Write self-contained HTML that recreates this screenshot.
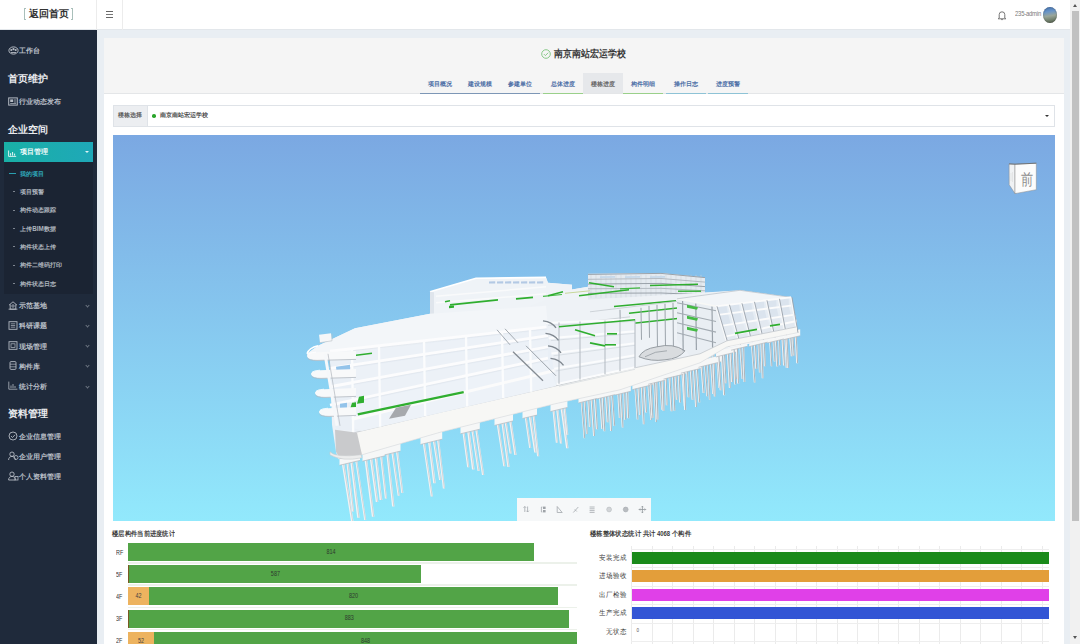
<!DOCTYPE html>
<html><head><meta charset="utf-8">
<style>
*{box-sizing:border-box;margin:0;padding:0}
html,body{width:1080px;height:644px;overflow:hidden;background:#e9eef3;font-family:"Liberation Sans",sans-serif}
.a{position:absolute}
.t{position:absolute;white-space:nowrap;line-height:1}
#hdr{left:0;top:0;width:1070px;height:30px;background:#fff;border-bottom:1px solid #e3e7eb}
#side{left:0;top:30px;width:97px;height:614px;background:#1f2a3b}
.si{color:#b9bfc7;font-size:7px;font-weight:bold}
.sh{color:#e9ebee;font-size:10px;font-weight:bold}
.sub{color:#aeb5be;font-size:6.3px;font-weight:bold}
.ic{position:absolute;border:1px solid #aab1bb;border-radius:1px}
.chev{position:absolute;width:3px;height:3px;border-right:1px solid #6b7480;border-bottom:1px solid #6b7480;transform:rotate(45deg)}
#panel{left:104px;top:38px;width:960px;height:620px;background:#fff}
#phead{left:0;top:0;width:960px;height:56px;background:#f5f5f5;border-bottom:1px solid #e4e6e8}
.tab{position:absolute;top:35.2px;height:21px;font-size:6.3px;font-weight:bold;color:#4d6fa6;text-align:center;line-height:21px}
.ul{position:absolute;top:54.5px;height:1.5px}
#sb{left:1070px;top:0;width:10px;height:644px;background:#f1f1f1}
</style></head><body>
<!-- header -->
<div id="hdr" class="a">
  <div class="a" style="left:96px;top:0;width:1px;height:30px;background:#ececec"></div>
  <div class="a" style="left:122px;top:0;width:1px;height:30px;background:#ececec"></div>
  <div class="a" style="left:23.5px;top:8px;width:2px;height:12px;border:1px solid #a9bfba;border-right:none"></div>
  <div class="t" style="left:28.5px;top:9.2px;font-size:10.2px;font-weight:bold;color:#333">返回首页</div>
  <div class="a" style="left:71px;top:8px;width:2px;height:12px;border:1px solid #a9bfba;border-left:none"></div>
  <div class="a" style="left:105.5px;top:11px;width:7.5px;height:1.2px;background:#666"></div>
  <div class="a" style="left:105.5px;top:14px;width:7.5px;height:1.2px;background:#777"></div>
  <div class="a" style="left:105.5px;top:17px;width:7.5px;height:1.2px;background:#666"></div>
  <!-- bell -->
  <svg class="a" style="left:997px;top:10px" width="10" height="11" viewBox="0 0 10 11"><path d="M2.2 8V4.6a2.8 2.8 0 0 1 5.6 0V8l1 0.8H1.2z" fill="none" stroke="#666" stroke-width="0.9"/><path d="M4.2 9.6h1.6" stroke="#666" stroke-width="0.9"/></svg>
  <div class="t" style="left:1015px;top:10.2px;font-size:8px;color:#7a7a7a;letter-spacing:-0.3px;transform:scaleX(0.74);transform-origin:left">235-admin</div>
  <div class="a" style="left:1043px;top:7px;width:14px;height:16px;border-radius:50%;background:linear-gradient(170deg,#3f6fae 0%,#6a95c8 30%,#9aa69a 55%,#6f7d6a 80%,#4b5646 100%);box-shadow:inset 0 0 1.5px rgba(0,0,0,0.5)"></div>
</div>
<!-- sidebar -->
<div id="side" class="a">
  <!-- 工作台 -->
  <svg class="a" style="left:8px;top:16px" width="11" height="9" viewBox="0 0 11 9"><ellipse cx="5.5" cy="4.5" rx="4.6" ry="3.6" fill="none" stroke="#b4bac3" stroke-width="1"/><circle cx="3.3" cy="4" r="1.1" fill="#b4bac3"/><circle cx="5.5" cy="3.2" r="1.1" fill="#b4bac3"/><circle cx="7.7" cy="4" r="1.1" fill="#b4bac3"/><path d="M3 6.5h5" stroke="#b4bac3" stroke-width="0.9"/></svg>
  <div class="t si" style="left:19.4px;top:16.6px">工作台</div>
  <div class="t sh" style="left:8.3px;top:43.7px">首页维护</div>
  <!-- 行业动态发布 -->
  <svg class="a" style="left:8px;top:67px" width="10" height="9" viewBox="0 0 10 9"><rect x="0.7" y="0.9" width="8.6" height="7.2" fill="none" stroke="#b4bac3" stroke-width="1"/><rect x="2.2" y="2.4" width="3" height="2.6" fill="#b4bac3"/><path d="M6 3h2.3M6 5h2.3M2.2 6.6h6" stroke="#b4bac3" stroke-width="0.8"/></svg>
  <div class="t si" style="left:19.4px;top:67.8px">行业动态发布</div>
  <div class="t sh" style="left:8.3px;top:94.7px">企业空间</div>
  <!-- active 项目管理 -->
  <div class="a" style="left:4.3px;top:111.8px;width:88.6px;height:20.2px;background:linear-gradient(90deg,#19b0a6,#1fa8b8)"></div>
  <svg class="a" style="left:8.3px;top:119.5px" width="9" height="7" viewBox="0 0 9 7"><path d="M0.6 0.5V6.4H8.2" fill="none" stroke="#e8f6f6" stroke-width="0.9"/><path d="M2.6 5.6V3.2M4.6 5.6V2M6.6 5.6V3.6" stroke="#e8f6f6" stroke-width="1"/></svg>
  <div class="t" style="left:20.2px;top:118.8px;font-size:6.5px;font-weight:bold;color:#eefafa">项目管理</div>
  <div class="a" style="left:85.2px;top:121.4px;width:0;height:0;border-left:2.2px solid transparent;border-right:2.2px solid transparent;border-top:2.4px solid #dff4f6"></div>
  <!-- submenu -->
  <div class="a" style="left:4.3px;top:132px;width:88.6px;height:132px;background:#1b2433"></div>
  <div class="a" style="left:8.5px;top:143.4px;width:7.8px;height:0.9px;background:#2a9fb0"></div>
  <div class="t sub" style="left:20.2px;top:141.2px;color:#2fa6b8">我的项目</div>
  <div class="a" style="left:12.8px;top:161.4px;width:2.4px;height:0.9px;background:#7d8590"></div>
  <div class="t sub" style="left:20.2px;top:159.2px">项目预警</div>
  <div class="a" style="left:12.8px;top:179.6px;width:2.4px;height:0.9px;background:#7d8590"></div>
  <div class="t sub" style="left:20.2px;top:177.4px">构件动态跟踪</div>
  <div class="a" style="left:12.8px;top:198.1px;width:2.4px;height:0.9px;background:#7d8590"></div>
  <div class="t sub" style="left:20.2px;top:195.9px">上传BIM数据</div>
  <div class="a" style="left:12.8px;top:216.3px;width:2.4px;height:0.9px;background:#7d8590"></div>
  <div class="t sub" style="left:20.2px;top:214.1px">构件状态上传</div>
  <div class="a" style="left:12.8px;top:234.5px;width:2.4px;height:0.9px;background:#7d8590"></div>
  <div class="t sub" style="left:20.2px;top:232.3px">构件二维码打印</div>
  <div class="a" style="left:12.8px;top:252.9px;width:2.4px;height:0.9px;background:#7d8590"></div>
  <div class="t sub" style="left:20.2px;top:250.7px">构件状态日志</div>
  <!-- groups -->
  <svg class="a" style="left:8px;top:271px" width="10" height="9" viewBox="0 0 10 9"><path d="M1 4.2L5 0.8L9 4.2M2.2 3.4V8.2H7.8V3.4M0.6 8.2H9.4" fill="none" stroke="#b4bac3" stroke-width="0.9"/><circle cx="5" cy="5" r="1.2" fill="none" stroke="#b4bac3" stroke-width="0.8"/></svg>
  <div class="t si" style="left:19.4px;top:272.2px">示范基地</div>
  <div class="chev" style="left:85.6px;top:273.8px"></div>
  <svg class="a" style="left:8px;top:291px" width="10" height="9" viewBox="0 0 10 9"><rect x="1" y="0.7" width="8" height="7.6" fill="none" stroke="#b4bac3" stroke-width="0.9"/><path d="M2.8 2.8h4.4M2.8 4.5h4.4M2.8 6.2h4.4" stroke="#b4bac3" stroke-width="0.7"/></svg>
  <div class="t si" style="left:19.4px;top:292.3px">科研课题</div>
  <div class="chev" style="left:85.6px;top:293.9px"></div>
  <svg class="a" style="left:8px;top:311px" width="10" height="9" viewBox="0 0 10 9"><rect x="1" y="0.7" width="8" height="7.6" fill="none" stroke="#b4bac3" stroke-width="0.9"/><rect x="3" y="2.8" width="4" height="3.6" fill="none" stroke="#b4bac3" stroke-width="0.7"/></svg>
  <div class="t si" style="left:19.4px;top:312.5px">现场管理</div>
  <div class="chev" style="left:85.6px;top:314.1px"></div>
  <svg class="a" style="left:8px;top:331px" width="10" height="9" viewBox="0 0 10 9"><rect x="2" y="0.6" width="6" height="7.8" rx="1" fill="none" stroke="#b4bac3" stroke-width="0.9"/><path d="M2 3.2h6M2 5.8h6" stroke="#b4bac3" stroke-width="0.7"/></svg>
  <div class="t si" style="left:19.4px;top:332.6px">构件库</div>
  <div class="chev" style="left:85.6px;top:334.2px"></div>
  <svg class="a" style="left:8px;top:351px" width="10" height="9" viewBox="0 0 10 9"><path d="M0.8 0.6V8.2H9.4" fill="none" stroke="#b4bac3" stroke-width="0.8"/><path d="M3 7V4.5M5 7V3M7 7V5" stroke="#b4bac3" stroke-width="0.8"/></svg>
  <div class="t si" style="left:19.4px;top:352.9px">统计分析</div>
  <div class="chev" style="left:85.6px;top:354.5px"></div>
  <div class="t sh" style="left:8.3px;top:378.9px">资料管理</div>
  <svg class="a" style="left:8px;top:401px" width="10" height="10" viewBox="0 0 10 10"><circle cx="5" cy="5" r="4" fill="none" stroke="#b4bac3" stroke-width="0.9"/><path d="M3 5.1l1.5 1.4L7 3.8" fill="none" stroke="#b4bac3" stroke-width="0.9"/></svg>
  <div class="t si" style="left:19.4px;top:402.6px">企业信息管理</div>
  <svg class="a" style="left:8px;top:421px" width="11" height="10" viewBox="0 0 11 10"><circle cx="4" cy="3.2" r="2.2" fill="none" stroke="#b4bac3" stroke-width="0.9"/><path d="M0.6 9c0-2.4 1.5-3.6 3.4-3.6s3.4 1.2 3.4 3.6" fill="none" stroke="#b4bac3" stroke-width="0.9"/><circle cx="8" cy="6.5" r="2" fill="none" stroke="#b4bac3" stroke-width="0.8"/></svg>
  <div class="t si" style="left:19.4px;top:422.7px">企业用户管理</div>
  <svg class="a" style="left:8px;top:441px" width="11" height="10" viewBox="0 0 11 10"><circle cx="4" cy="3.2" r="2.2" fill="none" stroke="#b4bac3" stroke-width="0.9"/><path d="M0.6 9c0-2.4 1.5-3.6 3.4-3.6s3.4 1.2 3.4 3.6z" fill="none" stroke="#b4bac3" stroke-width="0.9"/><rect x="7" y="5.5" width="3" height="3.5" fill="none" stroke="#b4bac3" stroke-width="0.8"/></svg>
  <div class="t si" style="left:19.4px;top:442.9px">个人资料管理</div>
</div>
<!-- panel -->
<div id="panel" class="a">
  <div id="phead" class="a">
    <svg class="a" style="left:436.5px;top:10.5px" width="10" height="10" viewBox="0 0 10 10"><circle cx="5" cy="5" r="4.3" fill="none" stroke="#7ec47e" stroke-width="0.9"/><path d="M2.9 5.1l1.5 1.5L7.2 3.7" fill="none" stroke="#7ec47e" stroke-width="0.9"/></svg>
    <div class="t" style="left:450.4px;top:10.8px;font-size:9.1px;font-weight:bold;color:#3a3a3a;transform:scaleY(1.12);transform-origin:top">南京南站宏运学校</div>
    <div class="tab" style="left:315.7px;width:40px">项目概况</div>
    <div class="tab" style="left:355.7px;width:40px">建设规模</div>
    <div class="tab" style="left:395.7px;width:40.3px">参建单位</div>
    <div class="tab" style="left:439.2px;width:39.6px">总体进度</div>
    <div class="a" style="left:478.8px;top:34.8px;width:39.8px;height:20.7px;background:#e6e8eb"></div>
    <div class="tab" style="left:478.8px;width:39.8px;color:#666">楼栋进度</div>
    <div class="tab" style="left:519px;width:39.7px">构件明细</div>
    <div class="tab" style="left:562.3px;width:39.5px">操作日志</div>
    <div class="tab" style="left:604px;width:39.6px">进度预警</div>
    <div class="ul" style="left:315.7px;width:120.3px;background:#7d97b6"></div>
    <div class="ul" style="left:439.2px;width:39.6px;background:#9ad08a"></div>
    <div class="ul" style="left:519px;width:39.7px;background:#9ad08a"></div>
    <div class="ul" style="left:562.3px;width:39.5px;background:#8ec3d6"></div>
    <div class="ul" style="left:604px;width:39.6px;background:#8ec3d6"></div>
  </div>
  <!-- select -->
  <div class="a" style="left:9px;top:66.6px;width:942px;height:22.4px;border:1px solid #dfe3e8;background:#fff"></div>
  <div class="a" style="left:9px;top:66.6px;width:34.7px;height:22.4px;border:1px solid #dfe3e8;background:#eceef1"></div>
  <div class="t" style="left:14px;top:74.6px;font-size:5.9px;font-weight:bold;color:#5a5a5a">楼栋选择</div>
  <div class="a" style="left:48.3px;top:76.2px;width:3.6px;height:3.6px;border-radius:50%;background:#2aa52a"></div>
  <div class="t" style="left:55.9px;top:74.6px;font-size:5.9px;font-weight:bold;color:#4a4a4a">南京南站宏运学校</div>
  <div class="a" style="left:940.5px;top:76.5px;width:0;height:0;border-left:2.2px solid transparent;border-right:2.2px solid transparent;border-top:2.6px solid #333"></div>
  <!-- viewer -->
  <div id="viewer" class="a" style="left:9px;top:97.2px;width:942px;height:385.8px;background:linear-gradient(180deg,#7ba8e2 0%,#92e9fc 100%);overflow:hidden">
    <!--MODEL--><svg class="a" style="left:0;top:0" width="942" height="385.8" viewBox="113 135.2 942 385.8"><polygon points="340.8,457.5 343.3,457.5 353.7,522.5 351.2,522.5" fill="#f3f4f5" /><line x1="342.5" y1="457.5" x2="352.9" y2="522.5" stroke="#b8bec4" stroke-width="0.6" /><polygon points="345.7,456.7 347.9,456.7 354.1,511.6 352,511.6" fill="#f3f4f5" /><line x1="347.2" y1="456.7" x2="353.5" y2="511.6" stroke="#b8bec4" stroke-width="0.6" /><polygon points="349.6,456.1 352.1,456.1 359.7,517.9 357.2,517.9" fill="#f3f4f5" /><line x1="351.3" y1="456.1" x2="359" y2="517.9" stroke="#b8bec4" stroke-width="0.6" /><polygon points="354.4,455.3 356.4,455.3 366.2,520.1 364.2,520.1" fill="#f3f4f5" /><line x1="355.8" y1="455.3" x2="365.6" y2="520.1" stroke="#b8bec4" stroke-width="0.6" /><polygon points="339.5,456.5 360,451.6 360,460.6 339.5,465.5" fill="#f6f7f7" /><line x1="339.5" y1="465.5" x2="360" y2="460.6" stroke="#b3b8bd" stroke-width="0.7" /><polygon points="363.7,453.5 366.3,453.5 374.4,517 371.9,517" fill="#f3f4f5" /><line x1="365.5" y1="453.5" x2="373.7" y2="517" stroke="#b8bec4" stroke-width="0.6" /><polygon points="368.9,452 371.4,452 378.3,502.2 375.8,502.2" fill="#f3f4f5" /><line x1="370.6" y1="452" x2="377.5" y2="502.2" stroke="#b8bec4" stroke-width="0.6" /><polygon points="373.8,450.6 376.3,450.6 382.3,500.3 379.7,500.3" fill="#f3f4f5" /><line x1="375.6" y1="450.6" x2="381.5" y2="500.3" stroke="#b8bec4" stroke-width="0.6" /><polygon points="379.3,449 381.3,449 387,498.6 384.9,498.6" fill="#f3f4f5" /><line x1="380.7" y1="449" x2="386.4" y2="498.6" stroke="#b8bec4" stroke-width="0.6" /><polygon points="362.5,452.4 385,447 385,456 362.5,461.4" fill="#f6f7f7" /><line x1="362.5" y1="461.4" x2="385" y2="456" stroke="#b3b8bd" stroke-width="0.7" /><polygon points="385.6,447.2 387.9,447.2 394.5,506.7 392.1,506.7" fill="#f3f4f5" /><line x1="387.2" y1="447.2" x2="393.8" y2="506.7" stroke="#b8bec4" stroke-width="0.6" /><polygon points="390.4,445.8 392.5,445.8 399.7,495.9 397.7,495.9" fill="#f3f4f5" /><line x1="391.9" y1="445.8" x2="399.1" y2="495.9" stroke="#b8bec4" stroke-width="0.6" /><polygon points="395.1,444.4 397.3,444.4 403.4,493.2 401.3,493.2" fill="#f3f4f5" /><line x1="396.6" y1="444.4" x2="402.7" y2="493.2" stroke="#b8bec4" stroke-width="0.6" /><polygon points="384.5,446.1 400.5,442.3 400.5,451.3 384.5,455.1" fill="#f6f7f7" /><line x1="384.5" y1="455.1" x2="400.5" y2="451.3" stroke="#b3b8bd" stroke-width="0.7" /><polygon points="421.8,436.8 424,436.8 432.9,496.8 430.7,496.8" fill="#f3f4f5" /><line x1="423.3" y1="436.8" x2="432.2" y2="496.8" stroke="#b8bec4" stroke-width="0.6" /><polygon points="427.2,435.2 429.7,435.2 435.7,483.5 433.2,483.5" fill="#f3f4f5" /><line x1="428.9" y1="435.2" x2="434.9" y2="483.5" stroke="#b8bec4" stroke-width="0.6" /><polygon points="431.7,433.9 433.9,433.9 441.3,480.3 439.1,480.3" fill="#f3f4f5" /><line x1="433.2" y1="433.9" x2="440.6" y2="480.3" stroke="#b8bec4" stroke-width="0.6" /><polygon points="436.2,432.6 438.3,432.6 445,488.7 442.9,488.7" fill="#f3f4f5" /><line x1="437.7" y1="432.6" x2="444.4" y2="488.7" stroke="#b8bec4" stroke-width="0.6" /><polygon points="420.5,435.7 442.2,430.4 442.2,439.4 420.5,444.7" fill="#f6f7f7" /><line x1="420.5" y1="444.7" x2="442.2" y2="439.4" stroke="#b3b8bd" stroke-width="0.7" /><polygon points="461.6,426.2 463.7,426.2 469.3,467.5 467.2,467.5" fill="#f3f4f5" /><line x1="463.1" y1="426.2" x2="468.7" y2="467.5" stroke="#b8bec4" stroke-width="0.6" /><polygon points="466.3,425 468.9,425 474.6,469.7 472,469.7" fill="#f3f4f5" /><line x1="468.1" y1="425" x2="473.8" y2="469.7" stroke="#b8bec4" stroke-width="0.6" /><polygon points="470.4,424 472.5,424 479.7,471.2 477.6,471.2" fill="#f3f4f5" /><line x1="471.9" y1="424" x2="479" y2="471.2" stroke="#b8bec4" stroke-width="0.6" /><polygon points="474.3,423 476.4,423 484.2,475.1 482,475.1" fill="#f3f4f5" /><line x1="475.8" y1="423" x2="483.5" y2="475.1" stroke="#b8bec4" stroke-width="0.6" /><polygon points="460.5,425 479.8,420.4 479.8,429.4 460.5,434" fill="#f6f7f7" /><line x1="460.5" y1="434" x2="479.8" y2="429.4" stroke="#b3b8bd" stroke-width="0.7" /><polygon points="495.7,417.7 497.8,417.7 505.4,466.5 503.3,466.5" fill="#f3f4f5" /><line x1="497.2" y1="417.7" x2="504.8" y2="466.5" stroke="#b8bec4" stroke-width="0.6" /><polygon points="500.5,416.5 502.7,416.5 509.6,467.2 507.4,467.2" fill="#f3f4f5" /><line x1="502" y1="416.5" x2="508.9" y2="467.2" stroke="#b8bec4" stroke-width="0.6" /><polygon points="503.6,415.7 505.7,415.7 511.7,453.7 509.6,453.7" fill="#f3f4f5" /><line x1="505.1" y1="415.7" x2="511.1" y2="453.7" stroke="#b8bec4" stroke-width="0.6" /><polygon points="508.2,414.6 510.6,414.6 516.6,455.3 514.3,455.3" fill="#f3f4f5" /><line x1="509.9" y1="414.6" x2="515.9" y2="455.3" stroke="#b8bec4" stroke-width="0.6" /><polygon points="494.5,416.6 513,412.2 513,421.2 494.5,425.6" fill="#f6f7f7" /><line x1="494.5" y1="425.6" x2="513" y2="421.2" stroke="#b3b8bd" stroke-width="0.7" /><polygon points="523.8,410.7 525.8,410.7 531.2,448.3 529.2,448.3" fill="#f3f4f5" /><line x1="525.2" y1="410.7" x2="530.6" y2="448.3" stroke="#b8bec4" stroke-width="0.6" /><polygon points="527.7,409.8 530.1,409.8 536.6,452.6 534.2,452.6" fill="#f3f4f5" /><line x1="529.4" y1="409.8" x2="535.9" y2="452.6" stroke="#b8bec4" stroke-width="0.6" /><polygon points="531.8,408.8 533.8,408.8 539.2,456.5 537.1,456.5" fill="#f3f4f5" /><line x1="533.2" y1="408.8" x2="538.5" y2="456.5" stroke="#b8bec4" stroke-width="0.6" /><polygon points="522.5,409.7 537,406.3 537,415.3 522.5,418.7" fill="#f6f7f7" /><line x1="522.5" y1="418.7" x2="537" y2="415.3" stroke="#b3b8bd" stroke-width="0.7" /><polygon points="551.8,403.8 553.9,403.8 557.9,443 555.8,443" fill="#f3f4f5" /><line x1="553.2" y1="403.8" x2="557.3" y2="443" stroke="#b8bec4" stroke-width="0.6" /><polygon points="555.5,402.9 557.7,402.9 562.1,443.7 559.9,443.7" fill="#f3f4f5" /><line x1="557" y1="402.9" x2="561.4" y2="443.7" stroke="#b8bec4" stroke-width="0.6" /><polygon points="559.6,402 562,402 568.5,448.5 566.1,448.5" fill="#f3f4f5" /><line x1="561.3" y1="402" x2="567.8" y2="448.5" stroke="#b8bec4" stroke-width="0.6" /><polygon points="562.9,401.3 564.9,401.3 568.3,434.9 566.3,434.9" fill="#f3f4f5" /><line x1="564.3" y1="401.3" x2="567.7" y2="434.9" stroke="#b8bec4" stroke-width="0.6" /><polygon points="550.5,402.7 567.4,398.7 567.4,407.7 550.5,411.7" fill="#f6f7f7" /><line x1="550.5" y1="411.7" x2="567.4" y2="407.7" stroke="#b3b8bd" stroke-width="0.7" /><polygon points="580.4,397.5 582,397.5 585.2,438.4 583.6,438.4" fill="#f3f4f5" /><line x1="581.5" y1="397.5" x2="584.7" y2="438.4" stroke="#a2a9b0" stroke-width="0.85" /><polygon points="583.5,396.9 585.2,396.9 587.7,434.3 586,434.3" fill="#f3f4f5" /><line x1="584.7" y1="396.9" x2="587.2" y2="434.3" stroke="#a2a9b0" stroke-width="0.85" /><polygon points="587.2,396.1 589.1,396.1 590.9,427.2 588.9,427.2" fill="#f3f4f5" /><line x1="588.5" y1="396.1" x2="590.3" y2="427.2" stroke="#a2a9b0" stroke-width="0.85" /><polygon points="590.4,395.4 592.4,395.4 595.1,436.2 593.1,436.2" fill="#f3f4f5" /><line x1="591.8" y1="395.4" x2="594.5" y2="436.2" stroke="#a2a9b0" stroke-width="0.85" /><polygon points="593.7,394.7 595.8,394.7 598,429.5 596,429.5" fill="#f3f4f5" /><line x1="595.2" y1="394.7" x2="597.4" y2="429.5" stroke="#a2a9b0" stroke-width="0.85" /><polygon points="578.5,396.6 598.7,391.8 598.7,398.3 578.5,403.1" fill="#f6f7f7" /><line x1="578.5" y1="403.1" x2="598.7" y2="398.3" stroke="#b3b8bd" stroke-width="0.7" /><polygon points="598.8,393.6 600.8,393.6 603.3,429.1 601.3,429.1" fill="#f3f4f5" /><line x1="600.2" y1="393.6" x2="602.7" y2="429.1" stroke="#a2a9b0" stroke-width="0.85" /><polygon points="601.6,393 603.5,393 605.4,431.4 603.5,431.4" fill="#f3f4f5" /><line x1="603" y1="393" x2="604.8" y2="431.4" stroke="#a2a9b0" stroke-width="0.85" /><polygon points="604.8,392.3 606.9,392.3 608.8,422.4 606.7,422.4" fill="#f3f4f5" /><line x1="606.3" y1="392.3" x2="608.1" y2="422.4" stroke="#a2a9b0" stroke-width="0.85" /><polygon points="608.2,391.5 610.2,391.5 612.1,431.2 610.1,431.2" fill="#f3f4f5" /><line x1="609.6" y1="391.5" x2="611.5" y2="431.2" stroke="#a2a9b0" stroke-width="0.85" /><polygon points="611,390.9 612.7,390.9 615.2,426.1 613.5,426.1" fill="#f3f4f5" /><line x1="612.2" y1="390.9" x2="614.7" y2="426.1" stroke="#a2a9b0" stroke-width="0.85" /><polygon points="596.9,392.6 616.1,388.1 616.1,394.6 596.9,399.1" fill="#f6f7f7" /><line x1="596.9" y1="399.1" x2="616.1" y2="394.6" stroke="#b3b8bd" stroke-width="0.7" /><polygon points="617.1,389.6 618.9,389.6 620.7,418.2 618.8,418.2" fill="#f3f4f5" /><line x1="618.4" y1="389.6" x2="620.1" y2="418.2" stroke="#a2a9b0" stroke-width="0.85" /><polygon points="619.6,389.1 621.5,389.1 623.6,427.6 621.7,427.6" fill="#f3f4f5" /><line x1="620.9" y1="389.1" x2="623" y2="427.6" stroke="#a2a9b0" stroke-width="0.85" /><polygon points="623.3,387.9 625,387.9 626,419.9 624.2,419.9" fill="#f3f4f5" /><line x1="624.5" y1="387.9" x2="625.5" y2="419.9" stroke="#a2a9b0" stroke-width="0.85" /><polygon points="626,387 628.1,387 629.3,418.4 627.2,418.4" fill="#f3f4f5" /><line x1="627.4" y1="387" x2="628.6" y2="418.4" stroke="#a2a9b0" stroke-width="0.85" /><polygon points="615.3,388.7 630.8,385 630.8,391.5 615.3,395.2" fill="#f6f7f7" /><line x1="615.3" y1="395.2" x2="630.8" y2="391.5" stroke="#b3b8bd" stroke-width="0.7" /><polygon points="634.1,384.3 635.8,384.3 638.5,419.8 636.7,419.8" fill="#f3f4f5" /><line x1="635.3" y1="384.3" x2="637.9" y2="419.8" stroke="#a2a9b0" stroke-width="0.85" /><polygon points="637.3,383.2 639.3,383.2 640.9,415.2 638.9,415.2" fill="#f3f4f5" /><line x1="638.7" y1="383.2" x2="640.3" y2="415.2" stroke="#a2a9b0" stroke-width="0.85" /><polygon points="640.7,382 642.6,382 644.7,424.5 642.8,424.5" fill="#f3f4f5" /><line x1="642" y1="382" x2="644.1" y2="424.5" stroke="#a2a9b0" stroke-width="0.85" /><polygon points="643.3,381.1 645.4,381.1 647.1,412.6 645.1,412.6" fill="#f3f4f5" /><line x1="644.7" y1="381.1" x2="646.5" y2="412.6" stroke="#a2a9b0" stroke-width="0.85" /><polygon points="647.1,379.9 648.8,379.9 651.9,420.2 650.2,420.2" fill="#f3f4f5" /><line x1="648.3" y1="379.9" x2="651.4" y2="420.2" stroke="#a2a9b0" stroke-width="0.85" /><polygon points="649.6,379 651.3,379 652.9,415.5 651.2,415.5" fill="#f3f4f5" /><line x1="650.8" y1="379" x2="652.4" y2="415.5" stroke="#a2a9b0" stroke-width="0.85" /><polygon points="632.4,383.3 655.1,377.8 655.1,384.3 632.4,389.8" fill="#f6f7f7" /><line x1="632.4" y1="389.8" x2="655.1" y2="384.3" stroke="#b3b8bd" stroke-width="0.7" /><polygon points="649.6,379 651.3,379 653.5,418.2 651.7,418.2" fill="#f3f4f5" /><line x1="650.8" y1="379" x2="652.9" y2="418.2" stroke="#a2a9b0" stroke-width="0.85" /><polygon points="653,377.9 654.7,377.9 657,422.3 655.4,422.3" fill="#f3f4f5" /><line x1="654.2" y1="377.9" x2="656.5" y2="422.3" stroke="#a2a9b0" stroke-width="0.85" /><polygon points="655.3,377.1 657.2,377.1 658.6,419.8 656.6,419.8" fill="#f3f4f5" /><line x1="656.6" y1="377.1" x2="658" y2="419.8" stroke="#a2a9b0" stroke-width="0.85" /><polygon points="658.9,375.9 660.5,375.9 662.9,410 661.2,410" fill="#f3f4f5" /><line x1="660" y1="375.9" x2="662.4" y2="410" stroke="#a2a9b0" stroke-width="0.85" /><polygon points="661.5,375 663.5,375 664.6,411.3 662.6,411.3" fill="#f3f4f5" /><line x1="662.9" y1="375" x2="664" y2="411.3" stroke="#a2a9b0" stroke-width="0.85" /><polygon points="648.1,378 666.9,373.5 666.9,380 648.1,384.5" fill="#f6f7f7" /><line x1="648.1" y1="384.5" x2="666.9" y2="380" stroke="#b3b8bd" stroke-width="0.7" /><polygon points="664.7,373.9 666.7,373.9 667.7,405.4 665.8,405.4" fill="#f3f4f5" /><line x1="666.1" y1="373.9" x2="667.1" y2="405.4" stroke="#a2a9b0" stroke-width="0.85" /><polygon points="668.2,372.7 670.2,372.7 672.6,411.5 670.6,411.5" fill="#f3f4f5" /><line x1="669.6" y1="372.7" x2="672" y2="411.5" stroke="#a2a9b0" stroke-width="0.85" /><polygon points="671.9,371.5 673.7,371.5 675.3,410.9 673.5,410.9" fill="#f3f4f5" /><line x1="673.2" y1="371.5" x2="674.8" y2="410.9" stroke="#a2a9b0" stroke-width="0.85" /><polygon points="674.3,370.7 676.3,370.7 677.9,399.9 675.9,399.9" fill="#f3f4f5" /><line x1="675.7" y1="370.7" x2="677.3" y2="399.9" stroke="#a2a9b0" stroke-width="0.85" /><polygon points="677.6,369.6 679.5,369.6 681.1,402.7 679.1,402.7" fill="#f3f4f5" /><line x1="678.9" y1="369.6" x2="680.5" y2="402.7" stroke="#a2a9b0" stroke-width="0.85" /><polygon points="681.1,368.4 682.9,368.4 685.5,406.5 683.7,406.5" fill="#f3f4f5" /><line x1="682.4" y1="368.4" x2="685" y2="406.5" stroke="#a2a9b0" stroke-width="0.85" /><polygon points="663.5,372.8 686.3,367.3 686.3,373.8 663.5,379.3" fill="#f6f7f7" /><line x1="663.5" y1="379.3" x2="686.3" y2="373.8" stroke="#b3b8bd" stroke-width="0.7" /><polygon points="682.7,367.8 684.7,367.8 686.2,410.3 684.1,410.3" fill="#f3f4f5" /><line x1="684.1" y1="367.8" x2="685.6" y2="410.3" stroke="#a2a9b0" stroke-width="0.85" /><polygon points="686,366.7 687.9,366.7 689.5,397.5 687.6,397.5" fill="#f3f4f5" /><line x1="687.3" y1="366.7" x2="688.9" y2="397.5" stroke="#a2a9b0" stroke-width="0.85" /><polygon points="689.6,365.5 691.6,365.5 693.6,399.9 691.6,399.9" fill="#f3f4f5" /><line x1="691" y1="365.5" x2="693" y2="399.9" stroke="#a2a9b0" stroke-width="0.85" /><polygon points="692.8,364.4 694.8,364.4 697,407.2 695.1,407.2" fill="#f3f4f5" /><line x1="694.2" y1="364.4" x2="696.5" y2="407.2" stroke="#a2a9b0" stroke-width="0.85" /><polygon points="695.6,363.5 697.5,363.5 700.3,402.7 698.4,402.7" fill="#f3f4f5" /><line x1="697" y1="363.5" x2="699.7" y2="402.7" stroke="#a2a9b0" stroke-width="0.85" /><polygon points="680.9,366.9 701.3,362 701.3,368.5 680.9,373.4" fill="#f6f7f7" /><line x1="680.9" y1="373.4" x2="701.3" y2="368.5" stroke="#b3b8bd" stroke-width="0.7" /><polygon points="700.2,361.9 702.3,361.9 704.7,393.1 702.6,393.1" fill="#f3f4f5" /><line x1="701.7" y1="361.9" x2="704" y2="393.1" stroke="#a2a9b0" stroke-width="0.85" /><polygon points="703.7,359.8 705.5,359.8 708,396.5 706.3,396.5" fill="#f3f4f5" /><line x1="704.9" y1="359.8" x2="707.5" y2="396.5" stroke="#a2a9b0" stroke-width="0.85" /><polygon points="706.9,357.9 708.5,357.9 710.5,399.9 708.9,399.9" fill="#f3f4f5" /><line x1="708" y1="357.9" x2="710" y2="399.9" stroke="#a2a9b0" stroke-width="0.85" /><polygon points="709.6,356.3 711.5,356.3 714,394.1 712.2,394.1" fill="#f3f4f5" /><line x1="710.9" y1="356.3" x2="713.5" y2="394.1" stroke="#a2a9b0" stroke-width="0.85" /><polygon points="712.4,354.6 714.4,354.6 715.8,396.8 713.8,396.8" fill="#f3f4f5" /><line x1="713.8" y1="354.6" x2="715.2" y2="396.8" stroke="#a2a9b0" stroke-width="0.85" /><polygon points="715.8,352.6 717.5,352.6 719.9,388.3 718.3,388.3" fill="#f3f4f5" /><line x1="717" y1="352.6" x2="719.4" y2="388.3" stroke="#a2a9b0" stroke-width="0.85" /><polygon points="698.5,361 721.4,355.4 721.4,361.9 698.5,367.5" fill="#f6f7f7" /><line x1="698.5" y1="367.5" x2="721.4" y2="361.9" stroke="#b3b8bd" stroke-width="0.7" /><polygon points="717.1,351.8 719.2,351.8 721.7,390.4 719.7,390.4" fill="#f3f4f5" /><line x1="718.6" y1="351.8" x2="721.1" y2="390.4" stroke="#a2a9b0" stroke-width="0.85" /><polygon points="720.6,349.8 722.7,349.8 725.2,395.4 723.1,395.4" fill="#f3f4f5" /><line x1="722.1" y1="349.8" x2="724.6" y2="395.4" stroke="#a2a9b0" stroke-width="0.85" /><polygon points="722.9,348.4 724.7,348.4 726.7,383.5 724.9,383.5" fill="#f3f4f5" /><line x1="724.2" y1="348.4" x2="726.1" y2="383.5" stroke="#a2a9b0" stroke-width="0.85" /><polygon points="726.5,346.3 728.5,346.3 730.9,388.2 728.9,388.2" fill="#f3f4f5" /><line x1="727.9" y1="346.3" x2="730.3" y2="388.2" stroke="#a2a9b0" stroke-width="0.85" /><polygon points="729.3,345.5 731.3,345.5 733.1,382.1 731.1,382.1" fill="#f3f4f5" /><line x1="730.7" y1="345.5" x2="732.5" y2="382.1" stroke="#a2a9b0" stroke-width="0.85" /><polygon points="732.6,344.9 734.6,344.9 737.1,379.2 735,379.2" fill="#f3f4f5" /><line x1="734" y1="344.9" x2="736.5" y2="379.2" stroke="#a2a9b0" stroke-width="0.85" /><polygon points="716,350.6 737.1,345.5 737.1,352 716,357.1" fill="#f6f7f7" /><line x1="716" y1="357.1" x2="737.1" y2="352" stroke="#b3b8bd" stroke-width="0.7" /><polygon points="732.7,344.9 734.5,344.9 736.1,384.6 734.3,384.6" fill="#f3f4f5" /><line x1="734" y1="344.9" x2="735.6" y2="384.6" stroke="#a2a9b0" stroke-width="0.85" /><polygon points="735.8,344.2 737.9,344.2 739.2,383.7 737.1,383.7" fill="#f3f4f5" /><line x1="737.3" y1="344.2" x2="738.5" y2="383.7" stroke="#a2a9b0" stroke-width="0.85" /><polygon points="739.1,343.6 740.9,343.6 743.4,379.3 741.6,379.3" fill="#f3f4f5" /><line x1="740.4" y1="343.6" x2="742.9" y2="379.3" stroke="#a2a9b0" stroke-width="0.85" /><polygon points="742.2,343 744.1,343 745.4,382.3 743.5,382.3" fill="#f3f4f5" /><line x1="743.5" y1="343" x2="744.8" y2="382.3" stroke="#a2a9b0" stroke-width="0.85" /><polygon points="731.1,343.9 747.4,340 747.4,346.5 731.1,350.4" fill="#f6f7f7" /><line x1="731.1" y1="350.4" x2="747.4" y2="346.5" stroke="#b3b8bd" stroke-width="0.7" /><polygon points="750.7,341.3 752.4,341.3 755.6,382.7 753.8,382.7" fill="#f3f4f5" /><line x1="751.9" y1="341.3" x2="755" y2="382.7" stroke="#a2a9b0" stroke-width="0.85" /><polygon points="753.8,340.6 755.8,340.6 757.3,369 755.3,369" fill="#f3f4f5" /><line x1="755.2" y1="340.6" x2="756.7" y2="369" stroke="#a2a9b0" stroke-width="0.85" /><polygon points="757.4,339.9 759.1,339.9 760.6,372.8 758.9,372.8" fill="#f3f4f5" /><line x1="758.6" y1="339.9" x2="760.1" y2="372.8" stroke="#a2a9b0" stroke-width="0.85" /><polygon points="760.2,339.4 762.2,339.4 763.6,378.4 761.7,378.4" fill="#f3f4f5" /><line x1="761.6" y1="339.4" x2="763" y2="378.4" stroke="#a2a9b0" stroke-width="0.85" /><polygon points="762.8,338.8 764.7,338.8 765.8,366.5 763.9,366.5" fill="#f3f4f5" /><line x1="764.1" y1="338.8" x2="765.3" y2="366.5" stroke="#a2a9b0" stroke-width="0.85" /><polygon points="749.2,340.3 768.3,335.7 768.3,342.2 749.2,346.8" fill="#f6f7f7" /><line x1="749.2" y1="346.8" x2="768.3" y2="342.2" stroke="#b3b8bd" stroke-width="0.7" /><polygon points="768.9,337.6 770.6,337.6 772.3,366.4 770.7,366.4" fill="#f3f4f5" /><line x1="770.1" y1="337.6" x2="771.9" y2="366.4" stroke="#a2a9b0" stroke-width="0.85" /><polygon points="772.4,336.9 774.1,336.9 775.5,361.6 773.7,361.6" fill="#f3f4f5" /><line x1="773.6" y1="336.9" x2="774.9" y2="361.6" stroke="#a2a9b0" stroke-width="0.85" /><polygon points="774.8,336.4 776.6,336.4 778.2,366.7 776.4,366.7" fill="#f3f4f5" /><line x1="776.1" y1="336.4" x2="777.7" y2="366.7" stroke="#a2a9b0" stroke-width="0.85" /><polygon points="778.1,335.8 779.8,335.8 780.9,365.4 779.2,365.4" fill="#f3f4f5" /><line x1="779.3" y1="335.8" x2="780.4" y2="365.4" stroke="#a2a9b0" stroke-width="0.85" /><polygon points="781.3,335.1 783.3,335.1 785.1,365.8 783,365.8" fill="#f3f4f5" /><line x1="782.7" y1="335.1" x2="784.5" y2="365.8" stroke="#a2a9b0" stroke-width="0.85" /><polygon points="784.3,334.5 786.3,334.5 787.7,367.9 785.7,367.9" fill="#f3f4f5" /><line x1="785.7" y1="334.5" x2="787.1" y2="367.9" stroke="#a2a9b0" stroke-width="0.85" /><polygon points="767.6,336.6 789.2,331.4 789.2,337.9 767.6,343.1" fill="#f6f7f7" /><line x1="767.6" y1="343.1" x2="789.2" y2="337.9" stroke="#b3b8bd" stroke-width="0.7" /><polygon points="785.6,334.3 787.4,334.3 788.9,368.1 787.2,368.1" fill="#f3f4f5" /><line x1="786.8" y1="334.3" x2="788.4" y2="368.1" stroke="#a2a9b0" stroke-width="0.85" /><polygon points="788.9,333.6 791,333.6 792.8,356.5 790.8,356.5" fill="#f3f4f5" /><line x1="790.4" y1="333.6" x2="792.2" y2="356.5" stroke="#a2a9b0" stroke-width="0.85" /><polygon points="791.4,333.1 793.1,333.1 794.6,355.8 792.9,355.8" fill="#f3f4f5" /><line x1="792.6" y1="333.1" x2="794.1" y2="355.8" stroke="#a2a9b0" stroke-width="0.85" /><polygon points="794.6,332.5 796.6,332.5 798.2,363.4 796.2,363.4" fill="#f3f4f5" /><line x1="796" y1="332.5" x2="797.6" y2="363.4" stroke="#a2a9b0" stroke-width="0.85" /><polygon points="783.8,333.3 800.2,329.5 800.2,336 783.8,339.8" fill="#f6f7f7" /><line x1="783.8" y1="339.8" x2="800.2" y2="336" stroke="#b3b8bd" stroke-width="0.7" /><polygon points="307,354 318,346 355,328.5 430,314 430,292 476,278.5 546,277.6 548,283 572,285 572,289.6 588,287 588,274 661,273.2 705,277.6 705,292.6 740,290.5 791,297.5 796.5,321.2 797,333 797,333 727,347 700,363 620,390 555,404 440,432.5 362,455 338,459 336,452 332,425 330,357 308,356" fill="#edf1f6" /><polygon points="588,274.5 661,273.5 705,277.6 705,293 588,300" fill="#e4eaf0" /><line x1="591" y1="275" x2="591" y2="298" stroke="#d0d5da" stroke-width="0.6" /><line x1="596" y1="275" x2="596" y2="298" stroke="#d0d5da" stroke-width="0.6" /><line x1="601" y1="275" x2="601" y2="298" stroke="#d0d5da" stroke-width="0.6" /><line x1="606" y1="275" x2="606" y2="298" stroke="#d0d5da" stroke-width="0.6" /><line x1="611" y1="275" x2="611" y2="298" stroke="#d0d5da" stroke-width="0.6" /><line x1="616" y1="275" x2="616" y2="298" stroke="#d0d5da" stroke-width="0.6" /><line x1="621" y1="275" x2="621" y2="298" stroke="#d0d5da" stroke-width="0.6" /><line x1="626" y1="275" x2="626" y2="298" stroke="#d0d5da" stroke-width="0.6" /><line x1="631" y1="275" x2="631" y2="298" stroke="#d0d5da" stroke-width="0.6" /><line x1="636" y1="275" x2="636" y2="298" stroke="#d0d5da" stroke-width="0.6" /><line x1="641" y1="275" x2="641" y2="298" stroke="#d0d5da" stroke-width="0.6" /><line x1="646" y1="275" x2="646" y2="298" stroke="#d0d5da" stroke-width="0.6" /><line x1="651" y1="275" x2="651" y2="298" stroke="#d0d5da" stroke-width="0.6" /><line x1="656" y1="275" x2="656" y2="298" stroke="#d0d5da" stroke-width="0.6" /><line x1="661" y1="275" x2="661" y2="298" stroke="#d0d5da" stroke-width="0.6" /><line x1="666" y1="275" x2="666" y2="298" stroke="#d0d5da" stroke-width="0.6" /><line x1="671" y1="275" x2="671" y2="298" stroke="#d0d5da" stroke-width="0.6" /><line x1="676" y1="275" x2="676" y2="298" stroke="#d0d5da" stroke-width="0.6" /><line x1="681" y1="275" x2="681" y2="298" stroke="#d0d5da" stroke-width="0.6" /><line x1="686" y1="275" x2="686" y2="298" stroke="#d0d5da" stroke-width="0.6" /><line x1="691" y1="275" x2="691" y2="298" stroke="#d0d5da" stroke-width="0.6" /><line x1="696" y1="275" x2="696" y2="298" stroke="#d0d5da" stroke-width="0.6" /><line x1="701" y1="275" x2="701" y2="298" stroke="#d0d5da" stroke-width="0.6" /><polyline points="588,274.6 661,273.6 705,277.8" fill="none" stroke="#9aa2aa" stroke-width="1.0" /><polyline points="588,279.5 661,278.7 705,282.3" fill="none" stroke="#b4bbc2" stroke-width="1.0" /><polyline points="588,284.3 661,283.6 705,286.8" fill="none" stroke="#9aa2aa" stroke-width="1.0" /><polyline points="588,289 661,288.5 705,291" fill="none" stroke="#b4bbc2" stroke-width="1.0" /><polyline points="588,293.5 661,293.2 705,295" fill="none" stroke="#9aa2aa" stroke-width="1.0" /><polygon points="600,276.5 615,276.3 615,278 600,278.2" fill="#c5d8ea" /><polygon points="625,276.5 640,276.3 640,278 625,278.2" fill="#c5d8ea" /><polygon points="650,276.5 665,276.3 665,278 650,278.2" fill="#c5d8ea" /><line x1="589" y1="283" x2="614" y2="287" stroke="#2fae2f" stroke-width="1.4" /><line x1="650" y1="285.8" x2="698" y2="284.4" stroke="#2fae2f" stroke-width="1.5" /><line x1="678" y1="291.4" x2="701" y2="291.4" stroke="#2fae2f" stroke-width="1.4" /><line x1="620" y1="289" x2="640" y2="288" stroke="#45bb45" stroke-width="1.2" /><polygon points="430,292 476,278.5 546,277.6 548,283 572,285 572,289.6 588,287 588,303 570,306 430,315" fill="#eff3f7" /><polyline points="430,292 476,278.5 546,277.6" fill="none" stroke="#ffffff" stroke-width="1.6" /><polygon points="489,281.6 495.2,281.4 495.2,283.6 489,283.8" fill="#b3c9e4" /><polygon points="497,281.6 503.2,281.4 503.2,283.6 497,283.8" fill="#b3c9e4" /><polygon points="505,281.6 511.2,281.4 511.2,283.6 505,283.8" fill="#b3c9e4" /><polygon points="513,281.6 519.2,281.4 519.2,283.6 513,283.8" fill="#b3c9e4" /><polygon points="521,281.6 527.2,281.4 527.2,283.6 521,283.8" fill="#b3c9e4" /><polygon points="529,281.6 535.2,281.4 535.2,283.6 529,283.8" fill="#b3c9e4" /><polygon points="537,281.6 543.2,281.4 543.2,283.6 537,283.8" fill="#b3c9e4" /><line x1="436" y1="296.5" x2="546" y2="287" stroke="#f9fafb" stroke-width="1.5" /><line x1="436" y1="303" x2="546" y2="294" stroke="#f9fafb" stroke-width="1.5" /><line x1="450" y1="305" x2="498" y2="300" stroke="#2fae2f" stroke-width="1.8" /><line x1="516" y1="299" x2="533" y2="297.5" stroke="#2fae2f" stroke-width="1.8" /><line x1="445" y1="302" x2="450" y2="301" stroke="#2fae2f" stroke-width="1.4" /><polygon points="449,306 454,305.6 454,308 449,308.4" fill="#2fae2f" /><line x1="543" y1="296.5" x2="562" y2="294.7" stroke="#45bb45" stroke-width="1.2" /><line x1="565" y1="293.5" x2="590" y2="291" stroke="#c8d89a" stroke-width="1" /><polygon points="430,292 434,292.5 434,315 430,315" fill="#dfe5ec" /><polygon points="546,300 588,300 705,293 740,291 677,299 677,340 636,368 556,386 545,323 530,306" fill="#eef2f6" /><line x1="548" y1="296" x2="563" y2="292" stroke="#2fae2f" stroke-width="1.4" /><line x1="579" y1="296" x2="629" y2="290" stroke="#2fae2f" stroke-width="1.5" /><line x1="614" y1="306.7" x2="676" y2="301" stroke="#2fae2f" stroke-width="1.6" /><line x1="629" y1="313.5" x2="682" y2="307.7" stroke="#2fae2f" stroke-width="1.6" /><line x1="629" y1="324" x2="680" y2="318.4" stroke="#2fae2f" stroke-width="1.6" /><line x1="641" y1="308" x2="641.5" y2="340" stroke="#9ca4ab" stroke-width="1.0" /><line x1="649" y1="306" x2="649.5" y2="338" stroke="#9ca4ab" stroke-width="1.0" /><line x1="657" y1="305" x2="657.5" y2="350" stroke="#9ca4ab" stroke-width="1.0" /><line x1="665" y1="304" x2="665.5" y2="348" stroke="#9ca4ab" stroke-width="1.0" /><line x1="673" y1="303" x2="673.5" y2="356" stroke="#9ca4ab" stroke-width="1.0" /><line x1="620" y1="310" x2="620.5" y2="338" stroke="#9ca4ab" stroke-width="1.0" /><polyline points="590,312 640,306 690,300" fill="none" stroke="#c0c6cc" stroke-width="0.7" /><polyline points="586,322 630,317" fill="none" stroke="#c0c6cc" stroke-width="0.7" /><path d="M639 357 q4 -8 18 -10 q16 -4 28 4 q-6 8 -20 9 q-14 2 -26 -3z" fill="#d9dcdf" stroke="#8d949a" stroke-width="0.9" /><path d="M645 357 q10 -6 22 -6" fill="none" stroke="#8d949a" stroke-width="0.7" /><polygon points="677,299 716,306.5 728.7,348.5 690,356 677,340" fill="#e9eef3" /><line x1="682.6" y1="301.1" x2="683.2" y2="351.4" stroke="#9aa2aa" stroke-width="1.2" /><line x1="695.8" y1="303.6" x2="696.4" y2="350.1" stroke="#9aa2aa" stroke-width="1.2" /><line x1="712" y1="306.6" x2="712.6" y2="348.5" stroke="#9aa2aa" stroke-width="1.2" /><line x1="677" y1="303" x2="716" y2="311" stroke="#a3abb2" stroke-width="1.1" /><line x1="677" y1="313" x2="716" y2="321.7" stroke="#a3abb2" stroke-width="1.1" /><line x1="677" y1="323" x2="716" y2="332.3" stroke="#a3abb2" stroke-width="1.1" /><line x1="677" y1="333" x2="716" y2="343" stroke="#a3abb2" stroke-width="1.1" /><polygon points="687,305 698,307.5 697,310 687,308" fill="#45bb45" /><polygon points="687,316 698,318.5 697,321 687,319" fill="#45bb45" /><polygon points="687,327 698,329.5 697,332 687,330" fill="#45bb45" /><polygon points="677,299 740,290.5 791,297.5 716,306.5" fill="#f2f5f8" /><polyline points="677,299 716,306.5 791,297.5" fill="none" stroke="#f8f8f6" stroke-width="1.6" /><polyline points="677,299 740,290.5 791,297.5" fill="none" stroke="#b9c0c7" stroke-width="0.7" /><polygon points="716,306.5 791,297.5 796.5,321.2 797,333 728.7,348.5" fill="#e6edf4" /><polygon points="717.5,306.3 726.2,305.3 728,313.7 719.5,314.8" fill="#dbe4ee" /><polygon points="730,304.8 738.8,303.8 740.1,312.2 731.6,313.3" fill="#dbe4ee" /><polygon points="742.5,303.3 751.2,302.3 752.3,310.7 743.8,311.7" fill="#dbe4ee" /><polygon points="755,301.8 763.8,300.8 764.5,309.1 756,310.2" fill="#dbe4ee" /><polygon points="767.5,300.3 776.2,299.3 776.6,307.6 768.1,308.7" fill="#dbe4ee" /><polygon points="780,298.8 788.8,297.8 788.8,306.1 780.3,307.1" fill="#dbe4ee" /><polygon points="719.5,314.8 728,313.7 730.8,324.5 722.4,325.8" fill="#dbe4ee" /><polygon points="731.6,313.3 740.1,312.2 742.8,322.7 734.4,323.9" fill="#dbe4ee" /><polygon points="743.8,311.7 752.3,310.7 754.8,320.8 746.4,322.1" fill="#dbe4ee" /><polygon points="756,310.2 764.5,309.1 766.8,319 758.4,320.3" fill="#dbe4ee" /><polygon points="768.1,308.7 776.6,307.6 778.8,317.2 770.4,318.4" fill="#dbe4ee" /><polygon points="780.3,307.1 788.8,306.1 790.8,315.3 782.4,316.6" fill="#dbe4ee" /><polygon points="722.4,325.8 730.8,324.5 733.9,334.8 725.5,336.7" fill="#e3e9f0" /><polygon points="734.4,323.9 742.8,322.7 746,332.2 737.5,334.1" fill="#e3e9f0" /><polygon points="746.4,322.1 754.8,320.8 758.1,329.6 749.6,331.4" fill="#e3e9f0" /><polygon points="758.4,320.3 766.8,319 770.2,326.9 761.7,328.8" fill="#e3e9f0" /><polygon points="770.4,318.4 778.8,317.2 782.2,324.3 773.8,326.2" fill="#e3e9f0" /><polygon points="782.4,316.6 790.8,315.3 794.3,321.7 785.9,323.5" fill="#e3e9f0" /><polygon points="725.5,336.7 733.9,334.8 737.4,345.1 729.4,346.7" fill="#e3e9f0" /><polygon points="737.5,334.1 746,332.2 748.9,342.8 740.9,344.4" fill="#e3e9f0" /><polygon points="749.6,331.4 758.1,329.6 760.4,340.4 752.4,342.1" fill="#e3e9f0" /><polygon points="761.7,328.8 770.2,326.9 771.9,338.1 763.9,339.7" fill="#e3e9f0" /><polygon points="773.8,326.2 782.2,324.3 783.4,335.8 775.4,337.4" fill="#e3e9f0" /><polygon points="785.9,323.5 794.3,321.7 794.9,333.4 786.9,335.1" fill="#e3e9f0" /><line x1="716" y1="306.5" x2="791" y2="297.5" stroke="#fbfbfb" stroke-width="1.8" /><line x1="718" y1="315" x2="791" y2="305.8" stroke="#fbfbfb" stroke-width="1.8" /><line x1="721" y1="326" x2="793" y2="315" stroke="#fbfbfb" stroke-width="1.8" /><line x1="724" y1="337" x2="796.5" y2="321.2" stroke="#fbfbfb" stroke-width="1.8" /><line x1="728" y1="347" x2="797" y2="333" stroke="#fbfbfb" stroke-width="1.8" /><line x1="716" y1="306.5" x2="728" y2="347" stroke="#f7f8f9" stroke-width="1.5" /><line x1="717" y1="306.5" x2="729" y2="347" stroke="#9aa2aa" stroke-width="0.9" /><line x1="728.5" y1="305" x2="739.5" y2="344.7" stroke="#f7f8f9" stroke-width="1.5" /><line x1="729.5" y1="305" x2="740.5" y2="344.7" stroke="#9aa2aa" stroke-width="0.9" /><line x1="741" y1="303.5" x2="751" y2="342.3" stroke="#f7f8f9" stroke-width="1.5" /><line x1="742" y1="303.5" x2="752" y2="342.3" stroke="#9aa2aa" stroke-width="0.9" /><line x1="753.5" y1="302" x2="762.5" y2="340" stroke="#f7f8f9" stroke-width="1.5" /><line x1="754.5" y1="302" x2="763.5" y2="340" stroke="#9aa2aa" stroke-width="0.9" /><line x1="766" y1="300.5" x2="774" y2="337.7" stroke="#f7f8f9" stroke-width="1.5" /><line x1="767" y1="300.5" x2="775" y2="337.7" stroke="#9aa2aa" stroke-width="0.9" /><line x1="778.5" y1="299" x2="785.5" y2="335.3" stroke="#f7f8f9" stroke-width="1.5" /><line x1="779.5" y1="299" x2="786.5" y2="335.3" stroke="#9aa2aa" stroke-width="0.9" /><line x1="791" y1="297.5" x2="797" y2="333" stroke="#f7f8f9" stroke-width="1.5" /><line x1="792" y1="297.5" x2="798" y2="333" stroke="#9aa2aa" stroke-width="0.9" /><line x1="735" y1="333.5" x2="757" y2="329.5" stroke="#2fae2f" stroke-width="1.8" /><line x1="770" y1="326" x2="780" y2="324.5" stroke="#2fae2f" stroke-width="1.8" /><polygon points="338,437 362,431 440,412.5 556,386 635,368 700,354 727,341 797,327 797,333 727,347 700,363 620,390 555,404 440,432.5 362,455 338,459" fill="#f7f7f5" /><polyline points="338,437 362,431 440,412.5 556,386 635,368 700,354 727,341 797,327" fill="none" stroke="#c3c8cd" stroke-width="0.8" /><polyline points="338,459 362,455 440,432.5 555,404 620,390 700,363 727,347 797,333" fill="none" stroke="#d5d9dc" stroke-width="0.6" /><polygon points="307,354 318,346 355,328.5 430,314 546,306 548,327 440,341.8 355,350.2 308,356" fill="#f3f6f9" /><path d="M307 354 q2 -6 11 -8" fill="none" stroke="#ffffff" stroke-width="1.5" /><polygon points="319,335 331,333.5 332,341 320,343" fill="#f6f7f8" /><polyline points="319,343 332,341 332,334" fill="none" stroke="#b9bfc5" stroke-width="0.6" /><polygon points="330,356 548,327 556,386 362,431 336,430 332,400" fill="#e9eff6" /><polygon points="352,352.1 548,330.1 548,335 352,364.4" fill="#ecf1f7" /><polygon points="352,368.4 548,339 548,346.1 352,381.9" fill="#ecf1f7" /><polygon points="352,385.9 548,350.1 548,357.4 352,399.5" fill="#ecf1f7" /><polygon points="352,403.5 548,361.4 556,386 362,431 352,428" fill="#edf2f8" /><line x1="330" y1="351.5" x2="548" y2="327.1" stroke="#fcfcfd" stroke-width="3" /><line x1="352" y1="350.9" x2="548" y2="328.9" stroke="#d9dfe6" stroke-width="0.5" /><line x1="330" y1="368.7" x2="548" y2="336" stroke="#fcfcfd" stroke-width="3" /><line x1="352" y1="367.2" x2="548" y2="337.8" stroke="#d9dfe6" stroke-width="0.5" /><line x1="330" y1="387" x2="548" y2="347.1" stroke="#fcfcfd" stroke-width="3" /><line x1="352" y1="384.7" x2="548" y2="348.9" stroke="#d9dfe6" stroke-width="0.5" /><line x1="330" y1="405.3" x2="548" y2="358.4" stroke="#fcfcfd" stroke-width="3" /><line x1="352" y1="402.3" x2="548" y2="360.2" stroke="#d9dfe6" stroke-width="0.5" /><line x1="352" y1="419.4" x2="556" y2="370.5" stroke="#fbfbfb" stroke-width="3" /><line x1="352" y1="349.1" x2="353.2" y2="433.5" stroke="#fbfcfd" stroke-width="2.3" /><line x1="379" y1="346" x2="380.2" y2="427" stroke="#fbfcfd" stroke-width="2.3" /><line x1="424" y1="341" x2="425.2" y2="416.3" stroke="#fbfcfd" stroke-width="2.3" /><line x1="466" y1="336.3" x2="467.2" y2="406.6" stroke="#fbfcfd" stroke-width="2.3" /><line x1="502" y1="332.3" x2="503.2" y2="398.3" stroke="#fbfcfd" stroke-width="2.3" /><line x1="530" y1="329.1" x2="531.2" y2="391.9" stroke="#fbfcfd" stroke-width="2.3" /><polygon points="336,367 350,365 350,374 337,376" fill="#93c3ea" /><polygon points="340,404 347,403 347,410 340,411" fill="#93c3ea" /><line x1="357.8" y1="414.7" x2="463.7" y2="392.3" stroke="#2fae2f" stroke-width="2.3" /><line x1="352" y1="356" x2="372" y2="353.5" stroke="#2fae2f" stroke-width="1.5" /><polygon points="359,397 364,396 364,403 357,404" fill="#2fae2f" /><polygon points="352,403 356,402.5 356,409 350,409.5" fill="#2fae2f" /><polygon points="389,419 396,408 411,405 405,416" fill="#a6a9ad" /><path d="M356 351.2 L316 352.4 Q306 353.5 307 356.5 Q308 360.5 317 360.6 L356 359.6z" fill="#f8f9fa" stroke="none" stroke-width="0" /><path d="M307.5 358.2 Q309 360.6 317 360.6 L356 359.6" fill="none" stroke="#b3b9c0" stroke-width="0.8" /><path d="M308 354.5 Q310 352.6 316 352.4" fill="none" stroke="#ffffff" stroke-width="0.8" /><path d="M356 369.2 L320 370.4 Q310 371.5 311 374.5 Q312 378.5 321 378.6 L356 377.6z" fill="#f8f9fa" stroke="none" stroke-width="0" /><path d="M311.5 376.2 Q313 378.6 321 378.6 L356 377.6" fill="none" stroke="#b3b9c0" stroke-width="0.8" /><path d="M312 372.5 Q314 370.6 320 370.4" fill="none" stroke="#ffffff" stroke-width="0.8" /><path d="M356 388.2 L324 389.4 Q314 390.5 315 393.5 Q316 397.5 325 397.6 L356 396.6z" fill="#f8f9fa" stroke="none" stroke-width="0" /><path d="M315.5 395.2 Q317 397.6 325 397.6 L356 396.6" fill="none" stroke="#b3b9c0" stroke-width="0.8" /><path d="M316 391.5 Q318 389.6 324 389.4" fill="none" stroke="#ffffff" stroke-width="0.8" /><path d="M356 407.2 L328 408.4 Q318 409.5 319 412.5 Q320 416.5 329 416.6 L356 415.6z" fill="#f8f9fa" stroke="none" stroke-width="0" /><path d="M319.5 414.2 Q321 416.6 329 416.6 L356 415.6" fill="none" stroke="#b3b9c0" stroke-width="0.8" /><path d="M320 410.5 Q322 408.6 328 408.4" fill="none" stroke="#ffffff" stroke-width="0.8" /><line x1="325" y1="354" x2="337" y2="426" stroke="#f6f8fa" stroke-width="3" /><line x1="328" y1="354" x2="340" y2="426" stroke="#b0b6bd" stroke-width="0.7" /><polygon points="335,430 357,433 362,455 340,459 336,452" fill="#c9cacc" /><path d="M330 452 q5 6 31 3 l1 3 q-20 4 -32 -3z" fill="#eceded" stroke="#c9cccf" stroke-width="0.6" /><polygon points="545.8,323.2 635,319.4 636,368 557,384.4" fill="#edf1f6" /><line x1="546" y1="323.2" x2="635" y2="319.4" stroke="#fbfcfd" stroke-width="2" /><line x1="548" y1="325.5" x2="635" y2="321.5" stroke="#c5ccd3" stroke-width="0.5" /><line x1="548.8" y1="338.4" x2="635" y2="331.4" stroke="#fbfcfd" stroke-width="2" /><line x1="550.8" y1="340.8" x2="635" y2="333.5" stroke="#c5ccd3" stroke-width="0.5" /><line x1="551.5" y1="353.7" x2="635" y2="343.4" stroke="#fbfcfd" stroke-width="2" /><line x1="553.5" y1="356" x2="635" y2="345.5" stroke="#c5ccd3" stroke-width="0.5" /><line x1="554.2" y1="368.9" x2="635" y2="355.4" stroke="#fbfcfd" stroke-width="2" /><line x1="556.2" y1="371.2" x2="635" y2="357.5" stroke="#c5ccd3" stroke-width="0.5" /><line x1="557" y1="384.2" x2="635" y2="367.4" stroke="#fbfcfd" stroke-width="2" /><line x1="559" y1="386.5" x2="635" y2="369.5" stroke="#c5ccd3" stroke-width="0.5" /><line x1="559" y1="322.6" x2="559" y2="384" stroke="#b7bec5" stroke-width="1.1" /><line x1="580" y1="321.7" x2="580" y2="379.6" stroke="#b7bec5" stroke-width="1.1" /><line x1="605" y1="320.7" x2="605" y2="374.4" stroke="#b7bec5" stroke-width="1.1" /><line x1="620" y1="320" x2="620" y2="371.3" stroke="#b7bec5" stroke-width="1.1" /><line x1="635" y1="319.4" x2="635" y2="368.2" stroke="#b7bec5" stroke-width="1.1" /><line x1="559" y1="327" x2="635" y2="320" stroke="#2fae2f" stroke-width="1.6" /><line x1="575" y1="330" x2="595" y2="336" stroke="#2fae2f" stroke-width="1.7" /><line x1="607" y1="334" x2="617" y2="334" stroke="#2fae2f" stroke-width="1.7" /><line x1="590" y1="343" x2="605" y2="346" stroke="#2fae2f" stroke-width="1.7" /><line x1="605" y1="345" x2="616" y2="345" stroke="#2fae2f" stroke-width="1.6" /><path d="M543.0 321.0 q9 1 13 7" fill="none" stroke="#7f878f" stroke-width="1.3" /><path d="M545.5 333.5 q9 1 13 7" fill="none" stroke="#7f878f" stroke-width="1.3" /><path d="M548.0 346.0 q9 1 13 7" fill="none" stroke="#7f878f" stroke-width="1.3" /><path d="M550.5 358.5 q9 1 13 7" fill="none" stroke="#7f878f" stroke-width="1.3" /><line x1="513" y1="352" x2="543" y2="381" stroke="#858c93" stroke-width="1.3" /><line x1="526" y1="346" x2="556" y2="376" stroke="#9aa1a8" stroke-width="1.0" /><line x1="497" y1="330" x2="510" y2="345" stroke="#9aa1a8" stroke-width="0.9" /><line x1="505" y1="329" x2="518" y2="343" stroke="#9aa1a8" stroke-width="0.9" /></svg><!--/MODEL-->
    <!-- cube -->
    <svg class="a" style="left:890px;top:24px" width="40" height="36" viewBox="0 0 40 36">
      <polygon points="6.1,4.9 12,5.2 12,34.6 6.2,25.8" fill="#f0f2f4" stroke="#8a8a8a" stroke-width="0.5"/>
      <polygon points="12,5.2 33.3,4.2 33.3,30.7 12,34.6" fill="#fcfcfc" stroke="#8a8a8a" stroke-width="0.5"/>
      <path d="M6.1 4.9L12 5.2L33.3 4.2" stroke="#666" stroke-width="0.8" fill="none"/>
      <text x="0" y="0" font-size="15.5" fill="#8c8c8c" font-family="Liberation Sans" font-weight="200" transform="translate(18.4 25.6) scale(0.76 1)">前</text>
      <path d="M8 14v8M9.5 13v10" stroke="#d8d8d8" stroke-width="0.5"/>
    </svg>
    <!-- toolbar -->
    <div class="a" style="left:403.6px;top:363px;width:134.3px;height:23px;background:#f6f8f9"></div>
    <svg class="a" style="left:403.6px;top:363px" width="135" height="23" viewBox="0 0 135 23">
      <g stroke="#a3a8ad" stroke-width="0.8" fill="none">
        <path d="M7.8 8.5v5.5M6.5 9.8l1.3-1.3 1.3 1.3M10.6 8.5v5.5M9.3 12.7l1.3 1.3 1.3-1.3"/>
        <path d="M24.4 9v5M24.4 9h1M24.4 14h1"/>
        <path d="M40.2 8.5v6h5z"/>
        <path d="M56.3 14.5l5-5.5M57.8 11.5l2 2"/>
        <path d="M72.6 9h5M72.6 10.8h5M72.6 12.6h5M72.6 14.4h5"/>
      </g>
      <g fill="#9ea3a8">
        <rect x="26" y="8.6" width="2.6" height="2.4"/><rect x="26" y="12" width="2.6" height="2.4"/>
      </g>
      <circle cx="92.1" cy="11.5" r="2.4" fill="#d2d5d8" stroke="#b5babe" stroke-width="0.6"/>
      <circle cx="108.7" cy="11.5" r="2.4" fill="#b9bdc1" stroke="#a3a8ad" stroke-width="0.6"/>
      <g stroke="#8f959a" stroke-width="0.8" fill="none">
        <path d="M125.4 8.2v6.6M122.1 11.5h6.6M124.4 9.2l1-1 1 1M124.4 13.8l1 1 1-1M123.1 10.5l-1 1 1 1M127.7 10.5l1 1-1 1"/>
      </g>
    </svg>
  </div>
  <!--CHART--><div class="t" style="left:8.2px;top:493.2px;font-size:6.5px;font-weight:bold;color:#3a3a3a;transform:scaleX(0.9);transform-origin:left">楼层构件当前进度统计</div>
  <div class="t" style="left:12.400000000000006px;top:510.6px;font-size:7px;color:#333;transform:scaleX(0.78);transform-origin:left">RF</div>
  <div class="a" style="left:24.0px;top:505.0px;width:406.1px;height:18px;background:#52a447"></div>
  <div class="t" style="left:24.0px;width:406.1px;text-align:center;top:510.8px;font-size:6.8px;color:#2f3a2f;transform:scaleX(0.8)">814</div>
  <div class="a" style="left:24px;top:524.1px;width:449px;height:1.6px;background:#ecf1ea"></div>
  <div class="t" style="left:12.400000000000006px;top:532.8px;font-size:7px;color:#333;transform:scaleX(0.78);transform-origin:left">5F</div>
  <div class="a" style="left:24px;top:527.2px;width:1px;height:18px;background:#7a5a22"></div>
  <div class="a" style="left:24.5px;top:527.2px;width:292.8px;height:18px;background:#52a447"></div>
  <div class="t" style="left:24.5px;width:292.8px;text-align:center;top:533.0px;font-size:6.8px;color:#2f3a2f;transform:scaleX(0.8)">587</div>
  <div class="a" style="left:24px;top:546.3px;width:449px;height:1.6px;background:#ecf1ea"></div>
  <div class="t" style="left:12.400000000000006px;top:555.0px;font-size:7px;color:#333;transform:scaleX(0.78);transform-origin:left">4F</div>
  <div class="a" style="left:24px;top:549.4px;width:21.0px;height:18px;background:#edb35f"></div>
  <div class="t" style="left:24px;width:21.0px;text-align:center;top:555.2px;font-size:6.8px;color:#444;transform:scaleX(0.8)">42</div>
  <div class="a" style="left:45.0px;top:549.4px;width:409.1px;height:18px;background:#52a447"></div>
  <div class="t" style="left:45.0px;width:409.1px;text-align:center;top:555.2px;font-size:6.8px;color:#2f3a2f;transform:scaleX(0.8)">820</div>
  <div class="a" style="left:24px;top:568.5px;width:449px;height:1.6px;background:#ecf1ea"></div>
  <div class="t" style="left:12.400000000000006px;top:577.2px;font-size:7px;color:#333;transform:scaleX(0.78);transform-origin:left">3F</div>
  <div class="a" style="left:24px;top:571.6px;width:1px;height:18px;background:#7a5a22"></div>
  <div class="a" style="left:24.5px;top:571.6px;width:440.5px;height:18px;background:#52a447"></div>
  <div class="t" style="left:24.5px;width:440.5px;text-align:center;top:577.4px;font-size:6.8px;color:#2f3a2f;transform:scaleX(0.8)">883</div>
  <div class="a" style="left:24px;top:590.7px;width:449px;height:1.6px;background:#ecf1ea"></div>
  <div class="t" style="left:12.400000000000006px;top:599.4px;font-size:7px;color:#333;transform:scaleX(0.78);transform-origin:left">2F</div>
  <div class="a" style="left:24px;top:593.8px;width:25.9px;height:18px;background:#edb35f"></div>
  <div class="t" style="left:24px;width:25.9px;text-align:center;top:599.6px;font-size:6.8px;color:#444;transform:scaleX(0.8)">52</div>
  <div class="a" style="left:49.9px;top:593.8px;width:423.1px;height:18px;background:#52a447"></div>
  <div class="t" style="left:49.9px;width:423.1px;text-align:center;top:599.6px;font-size:6.8px;color:#2f3a2f;transform:scaleX(0.8)">848</div>
  <div class="t" style="left:486.2px;top:493.2px;font-size:6.5px;font-weight:bold;color:#3a3a3a;transform:scaleX(0.91);transform-origin:left">楼栋整体状态统计 共计 4068 个构件</div>
  <div class="a" style="left:527.2px;top:508px;width:0.8px;height:110px;background:#ebebeb"></div>
  <div class="a" style="left:547.7px;top:508px;width:0.8px;height:110px;background:#ebebeb"></div>
  <div class="a" style="left:568.3px;top:508px;width:0.8px;height:110px;background:#ebebeb"></div>
  <div class="a" style="left:588.8px;top:508px;width:0.8px;height:110px;background:#ebebeb"></div>
  <div class="a" style="left:609.3px;top:508px;width:0.8px;height:110px;background:#ebebeb"></div>
  <div class="a" style="left:629.9px;top:508px;width:0.8px;height:110px;background:#ebebeb"></div>
  <div class="a" style="left:650.4px;top:508px;width:0.8px;height:110px;background:#ebebeb"></div>
  <div class="a" style="left:670.9px;top:508px;width:0.8px;height:110px;background:#ebebeb"></div>
  <div class="a" style="left:691.5px;top:508px;width:0.8px;height:110px;background:#ebebeb"></div>
  <div class="a" style="left:712.0px;top:508px;width:0.8px;height:110px;background:#ebebeb"></div>
  <div class="a" style="left:732.6px;top:508px;width:0.8px;height:110px;background:#ebebeb"></div>
  <div class="a" style="left:753.1px;top:508px;width:0.8px;height:110px;background:#ebebeb"></div>
  <div class="a" style="left:773.6px;top:508px;width:0.8px;height:110px;background:#ebebeb"></div>
  <div class="a" style="left:794.2px;top:508px;width:0.8px;height:110px;background:#ebebeb"></div>
  <div class="a" style="left:814.7px;top:508px;width:0.8px;height:110px;background:#ebebeb"></div>
  <div class="a" style="left:835.2px;top:508px;width:0.8px;height:110px;background:#ebebeb"></div>
  <div class="a" style="left:855.8px;top:508px;width:0.8px;height:110px;background:#ebebeb"></div>
  <div class="a" style="left:876.3px;top:508px;width:0.8px;height:110px;background:#ebebeb"></div>
  <div class="a" style="left:896.8px;top:508px;width:0.8px;height:110px;background:#ebebeb"></div>
  <div class="a" style="left:917.4px;top:508px;width:0.8px;height:110px;background:#ebebeb"></div>
  <div class="a" style="left:937.9px;top:508px;width:0.8px;height:110px;background:#ebebeb"></div>
  <div class="a" style="left:527.2px;top:510.5px;width:418.1px;height:0.8px;background:#eeeeee"></div>
  <div class="a" style="left:527.2px;top:529.0px;width:418.1px;height:0.8px;background:#eeeeee"></div>
  <div class="a" style="left:527.2px;top:547.5px;width:418.1px;height:0.8px;background:#eeeeee"></div>
  <div class="a" style="left:527.2px;top:566.0px;width:418.1px;height:0.8px;background:#eeeeee"></div>
  <div class="a" style="left:527.2px;top:584.5px;width:418.1px;height:0.8px;background:#eeeeee"></div>
  <div class="a" style="left:527.2px;top:603.0px;width:418.1px;height:0.8px;background:#eeeeee"></div>
  <div class="t" style="left:436px;width:86.60000000000002px;text-align:right;top:516.6px;font-size:6.7px;color:#3a3a3a;transform:scaleY(1.08)">安装完成</div>
  <div class="a" style="left:527.7px;top:513.8px;width:417.6px;height:12px;background:#1a8a1a"></div>
  <div class="t" style="left:436px;width:86.60000000000002px;text-align:right;top:535.1px;font-size:6.7px;color:#3a3a3a;transform:scaleY(1.08)">进场验收</div>
  <div class="a" style="left:527.7px;top:532.3px;width:417.6px;height:12px;background:#e39e3a"></div>
  <div class="t" style="left:436px;width:86.60000000000002px;text-align:right;top:553.6px;font-size:6.7px;color:#3a3a3a;transform:scaleY(1.08)">出厂检验</div>
  <div class="a" style="left:527.7px;top:550.8px;width:417.6px;height:12px;background:#e040e8"></div>
  <div class="t" style="left:436px;width:86.60000000000002px;text-align:right;top:572.1px;font-size:6.7px;color:#3a3a3a;transform:scaleY(1.08)">生产完成</div>
  <div class="a" style="left:527.7px;top:569.3px;width:417.6px;height:12px;background:#3355d5"></div>
  <div class="t" style="left:436px;width:86.60000000000002px;text-align:right;top:590.6px;font-size:6.7px;color:#3a3a3a;transform:scaleY(1.08)">无状态</div>
  <div class="t" style="left:532.5px;top:591.4px;font-size:4.6px;color:#555">0</div><!--/CHART-->
</div>
<!-- scrollbar -->
<div id="sb" class="a">
  <div class="a" style="left:1.5px;top:11.2px;width:7.5px;height:509.6px;background:#c1c1c1"></div>
  <div class="a" style="left:2.5px;top:4px;width:0;height:0;border-left:2.5px solid transparent;border-right:2.5px solid transparent;border-bottom:3px solid #555"></div>
  <div class="a" style="left:2.5px;top:636px;width:0;height:0;border-left:2.5px solid transparent;border-right:2.5px solid transparent;border-top:3px solid #555"></div>
</div>
</body></html>
